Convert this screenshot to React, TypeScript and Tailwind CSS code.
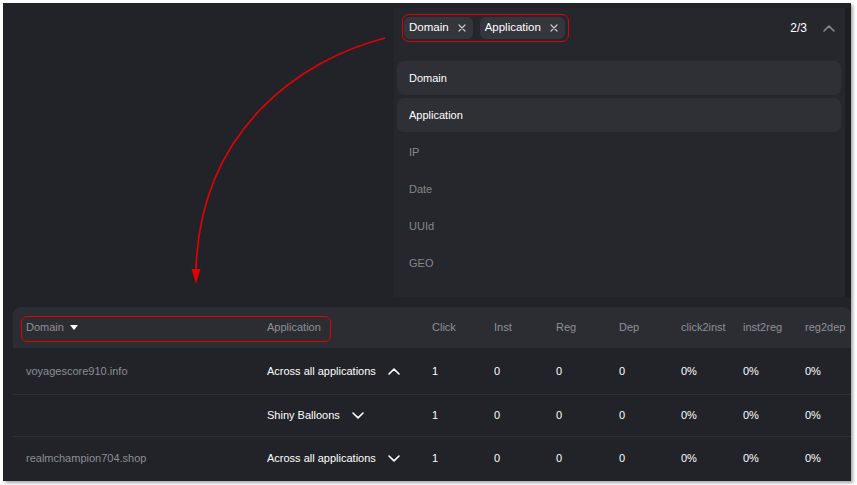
import React from 'react';

const COLUMNS = ['Click', 'Inst', 'Reg', 'Dep', 'click2inst', 'inst2reg', 'reg2dep'];
const VALUES = ['1', '0', '0', '0', '0%', '0%', '0%'];

const OPTIONS = [
  { label: 'Domain', selected: true },
  { label: 'Application', selected: true },
  { label: 'IP', selected: false },
  { label: 'Date', selected: false },
  { label: 'UUId', selected: false },
  { label: 'GEO', selected: false },
];

const ROWS = [
  { domain: 'voyagescore910.info', app: 'Across all applications', open: true, h: 'h-[46px]' },
  { domain: '', app: 'Shiny Balloons', open: false, h: 'h-[42px]' },
  { domain: 'realmchampion704.shop', app: 'Across all applications', open: false, h: 'h-[43px]' },
];

const GRID = 'grid grid-cols-[241px_165px_62px_62px_63px_62px_62px_62px_1fr]';

function Chevron({ up, className }: { up: boolean; className: string }) {
  return (
    <svg width="12" height="7" viewBox="0 0 12 7" fill="none" className={className}>
      <path
        d={up ? 'M1 6L6 1.2L11 6' : 'M1 1L6 5.8L11 1'}
        stroke="currentColor"
        strokeWidth="1.6"
        strokeLinecap="round"
        strokeLinejoin="round"
      />
    </svg>
  );
}

function Chip({ label }: { label: string }) {
  return (
    <div className="flex h-[22px] items-center gap-[9px] rounded-[6px] bg-[#35363c] pl-[5px] pr-[7px] text-[11.5px] text-white">
      <span>{label}</span>
      <svg width="8" height="8" viewBox="0 0 8 8" className="text-[#c9cace]">
        <path d="M1 1L7 7M7 1L1 7" stroke="currentColor" strokeWidth="1.2" strokeLinecap="round" />
      </svg>
    </div>
  );
}

export default function App() {
  return (
    <div className="relative h-[485px] w-[857px] bg-white pl-[3px] pt-[3px] font-['Liberation_Sans',Arial,sans-serif]">
      <div className="h-[478px] w-[848px] overflow-hidden bg-[#212328] shadow-[2px_2px_3px_rgba(0,0,0,0.35)]">
        {/* group-by dropdown */}
        <div className="flex h-[294px] pt-[5px]">
          <div className="flex-1" />
          <div className="flex w-[451px] flex-col bg-[#26272c] pl-[3px] pr-[4px]">
            <div className="flex h-[40px] items-center pl-[5px] pr-[6px]">
              <div className="flex gap-[7px] rounded-[7px] border-[1.5px] border-[#e00000] py-[2px] pl-[1px] pr-[3px]">
                <Chip label="Domain" />
                <Chip label="Application" />
              </div>
              <div className="flex-1" />
              <span className="text-[12px] text-white">2/3</span>
              <Chevron up className="ml-[16px] text-[#85878d]" />
            </div>
            <div className="mt-[13px] flex flex-col gap-[3px]">
              {OPTIONS.map((option) => (
                <div
                  key={option.label}
                  className={
                    option.selected
                      ? 'flex h-[34px] items-center rounded-[7px] bg-[#2f3036] pl-[12px] text-[11px] text-white'
                      : 'flex h-[34px] items-center pl-[12px] text-[11px] text-[#85878d]'
                  }
                >
                  {option.label}
                </div>
              ))}
            </div>
          </div>
          <div className="w-[6px] bg-[#1d1e22]" />
        </div>

        {/* table */}
        <div className="ml-[10px] mt-[10px] text-[11px]">
          <div className={`${GRID} relative h-[41px] items-center rounded-t-[8px] bg-[#2c2d32] text-[#8e9096]`}>
            <div className="flex items-center gap-[6px] pl-[13px]">
              <span>Domain</span>
              <svg width="8" height="5" viewBox="0 0 8 5">
                <path d="M0 0H8L4 5Z" fill="#ffffff" />
              </svg>
            </div>
            <div className="pl-[13px]">Application</div>
            {COLUMNS.map((column) => (
              <div key={column} className="pl-[13px]">
                {column}
              </div>
            ))}
            <div className="pointer-events-none absolute left-[8px] top-[9px] h-[26px] w-[310px] rounded-[6px] border-[1.5px] border-[#e00000]" />
          </div>
          {ROWS.map((row, index) => (
            <div
              key={index}
              className={`${GRID} ${row.h} items-center ${index > 0 ? 'border-t border-[#2d2f34]' : ''}`}
            >
              <div className="pl-[13px] text-[#8c8e94]">{row.domain}</div>
              <div className="flex items-center gap-[12px] pl-[13px] text-white">
                <span>{row.app}</span>
                <Chevron up={row.open} className="text-white" />
              </div>
              {VALUES.map((value, i) => (
                <div key={i} className="pl-[13px] text-white">
                  {value}
                </div>
              ))}
            </div>
          ))}
        </div>
      </div>

      {/* annotation arrow */}
      <svg width="857" height="485" viewBox="0 0 857 485" className="pointer-events-none absolute left-0 top-0">
        <path d="M385 38C300 60 200 130 196 270" stroke="#e00000" strokeWidth="1.7" fill="none" />
        <path d="M191.5 269L200.5 269L196 284Z" fill="#e00000" />
      </svg>
    </div>
  );
}
